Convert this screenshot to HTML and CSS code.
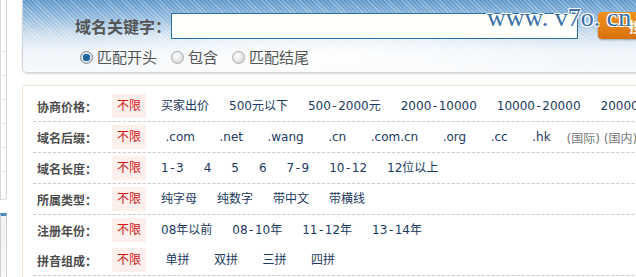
FILE: index.html
```html
<!DOCTYPE html>
<html lang="zh-CN">
<head>
    <meta charset="UTF-8">
    <title>域名搜索</title>
    <link rel="stylesheet" href="styles.css">
</head>
<body>
    <div class="page">
        <aside class="side">
            <ul class="sideMenu">
                <li></li><li></li><li></li><li></li><li></li><li></li>
            </ul>
            <div class="sideBox"></div>
        </aside>

        <div class="main">
            <div class="search">
                <div class="searchRow">
                    <label class="searchLabel">域名关键字：</label>
                    <input class="searchInput" type="text">
                    <button class="searchBtn">搜索</button>
                </div>
                <div class="match">
                    <span class="radio on"></span><span class="matchText">匹配开头</span>
                    <span class="radio"></span><span class="matchText">包含</span>
                    <span class="radio"></span><span class="matchText">匹配结尾</span>
                </div>
                <div class="mark">www. v7o. cn</div>
            </div>

            <div class="filter">
                <div class="frow">
                    <span class="fname">协商价格：</span>
                    <div class="flist">
                        <a class="cur">不限</a>
                        <a>买家出价</a>
                        <a>500元以下</a>
                        <a>500<i>-</i>2000元</a>
                        <a>2000<i>-</i>10000</a>
                        <a>10000<i>-</i>20000</a>
                        <a>20000以上</a>
                    </div>
                </div>
                <div class="frow loose">
                    <span class="fname">域名后缀：</span>
                    <div class="flist">
                        <a class="cur">不限</a>
                        <a>.com</a>
                        <a>.net</a>
                        <a>.wang</a>
                        <a>.cn</a>
                        <a>.com.cn</a>
                        <a>.org</a>
                        <a>.cc</a>
                        <a>.hk</a>
                        <span class="note">(国际) (国内)</span>
                    </div>
                </div>
                <div class="frow">
                    <span class="fname">域名长度：</span>
                    <div class="flist">
                        <a class="cur">不限</a>
                        <a>1<i>-</i>3</a>
                        <a>4</a>
                        <a>5</a>
                        <a>6</a>
                        <a>7<i>-</i>9</a>
                        <a>10<i>-</i>12</a>
                        <a>12位以上</a>
                    </div>
                </div>
                <div class="frow">
                    <span class="fname">所属类型：</span>
                    <div class="flist">
                        <a class="cur">不限</a>
                        <a>纯字母</a>
                        <a>纯数字</a>
                        <a>带中文</a>
                        <a>带横线</a>
                    </div>
                </div>
                <div class="frow nb">
                    <span class="fname">注册年份：</span>
                    <div class="flist">
                        <a class="cur">不限</a>
                        <a>08年以前</a>
                        <a>08<i>-</i>10年</a>
                        <a>11<i>-</i>12年</a>
                        <a>13<i>-</i>14年</a>
                    </div>
                </div>
                <div class="frow loose">
                    <span class="fname">拼音组成：</span>
                    <div class="flist">
                        <a class="cur">不限</a>
                        <a>单拼</a>
                        <a>双拼</a>
                        <a>三拼</a>
                        <a>四拼</a>
                    </div>
                </div>
            </div>
        </div>
    </div>
</body>
</html>
```

FILE: styles.css
```css
*{
    margin: 0;
    padding: 0;
    box-sizing: border-box;
}

body{
    background: #fff;
    overflow: hidden;
    font-family: "DejaVu Sans", "Noto Sans CJK SC", sans-serif;
    font-size: 12px;
}

.page{
    display: flex;
    width: 760px;
}

/* left column, only its edge shows */
.side{
    width: 7px;
    margin-right: 15px;
}

.sideMenu{
    list-style: none;
    height: 200px;
    padding-top: 28px;
    border: 1px solid #d8d8d8;
    border-top: 0;
    border-radius: 0 0 4px 0;
    background: #fff;
}

.sideMenu li{
    height: 24px;
    border-bottom: 1px solid #e6e6e6;
}

.sideBox{
    margin-top: 13px;
    height: 80px;
    border: 1px solid #d0d0d0;
    border-top: 3px solid #4d8cc2;
    background: linear-gradient(#f2f2f2, #fafafa);
}

.main{
    flex: 1;
}

/* search header */
.search{
    position: relative;
    height: 73px;
    padding: 13px 0 0 52px;
    border: 1px solid #cfd6dd;
    border-top: 0;
    border-radius: 0 0 0 5px;
    box-shadow: 0 1px 2px rgba(0, 0, 0, 0.15);
    background:
        repeating-linear-gradient(45deg, rgba(255, 255, 255, 0.28) 0 1px, transparent 1px 3px),
        radial-gradient(ellipse 260px 40px at 300px 58px, rgba(255, 255, 255, 0.9), rgba(255, 255, 255, 0) 100%),
        linear-gradient(to bottom, #5f98cb 0, #8fb8dc 22%, #cfe0ef 48%, #eef4f9 70%, #f7f9fb 100%);
}

.searchRow{
    display: flex;
    align-items: center;
    height: 26px;
}

.searchLabel{
    font-family: "Noto Sans CJK SC", sans-serif;
    font-size: 16px;
    font-weight: bold;
    color: #555;
    line-height: 26px;
}

.searchInput{
    width: 407px;
    height: 26px;
    border: 1px solid #2a6ea6;
    background: #fffffc;
    outline: none;
}

.searchBtn{
    margin-left: 20px;
    width: 90px;
    height: 27px;
    margin-top: -1px;
    padding-left: 31px;
    text-align: left;
    border: 0;
    border-radius: 4px;
    background: linear-gradient(#f0921e, #d8700c);
    box-shadow: 0 1px 2px rgba(0, 0, 0, 0.3);
    color: #fff;
    font-family: "Noto Sans CJK SC", sans-serif;
    font-size: 14px;
    font-weight: bold;
}

.match{
    display: flex;
    align-items: center;
    height: 20px;
    margin: 8px 0 0 5px;
}

.radio{
    width: 13px;
    height: 13px;
    border-radius: 50%;
    border: 1px solid #a9a9a9;
    background: radial-gradient(circle at 40% 35%, #fff 0, #e2e2e2 60%, #c8c8c8 100%);
    margin-right: 4px;
}

.radio.on{
    border-color: #7d8a94;
    background: radial-gradient(circle at 50% 50%, #0f4f86 0, #2d78b5 2.5px, #1b5e96 3.5px, #e8e8e8 4px, #cfcfcf 100%);
}

.matchText{
    font-family: "Noto Sans CJK SC", sans-serif;
    font-size: 15px;
    color: #555;
    margin-right: 14px;
    line-height: 20px;
}

.mark{
    position: absolute;
    left: 464px;
    top: 5px;
    font-family: "Liberation Serif", serif;
    font-size: 26px;
    line-height: 26px;
    color: #3a6ea4;
    text-shadow: 1px 1px 0 #fff, -1px -1px 0 #fff, 1px -1px 0 #fff, -1px 1px 0 #fff;
    white-space: nowrap;
}

/* filter table */
.filter{
    margin-top: 12px;
    padding-top: 5px;
    border: 1px solid #f0e2d4;
    height: 220px;
}

.frow{
    display: flex;
    align-items: center;
    height: 31px;
    margin: 0 10px;
    border-bottom: 1px dashed #c8c8c8;
}

.frow.nb{
    height: 30px;
    border-bottom: 0;
}

.fname{
    width: 79px;
    padding-left: 4px;
    font-family: "Noto Sans CJK SC", sans-serif;
    font-weight: bold;
    color: #4c4c4c;
    white-space: nowrap;
}

.flist{
    display: flex;
    align-items: center;
    gap: 10px;
    white-space: nowrap;
}

.flist a{
    padding: 0 5px;
    line-height: 24px;
    color: #1c3a60;
    cursor: pointer;
}

.flist a i{
    font-style: normal;
    padding: 0 1.5px;
}

.loose .flist a{
    padding-left: 9.5px;
}

.flist a.cur{
    padding: 0 5px;
    background: #fdefeb;
    color: #d41414;
}

.note{
    margin-left: 1px;
    color: #777;
}
```
